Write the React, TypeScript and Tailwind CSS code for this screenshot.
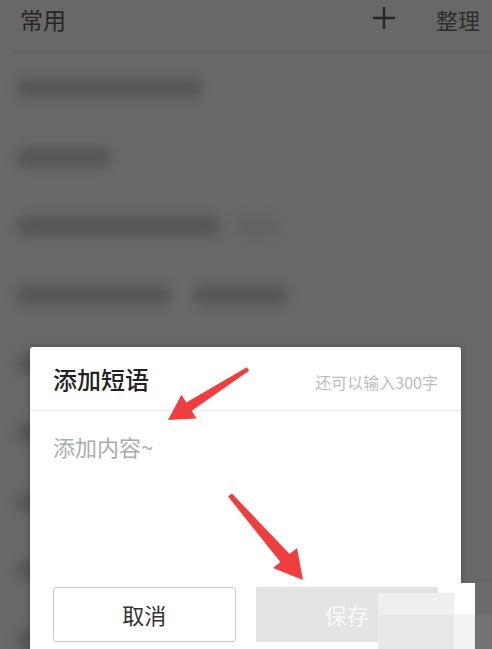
import React from "react";

const rows: { w: number; extra?: { gap: number; w: number; faint?: boolean } }[] = [
  { w: 186 },
  { w: 95 },
  { w: 205, extra: { gap: 15, w: 42, faint: true } },
  { w: 155, extra: { gap: 22, w: 95 } },
  { w: 170 },
  { w: 140 },
  { w: 190 },
  { w: 120 },
  { w: 160 },
];

export default function App() {
  return (
    <div
      className="relative w-[492px] h-[649px] overflow-hidden bg-[#686868]"
      style={{ fontFamily: '"Noto Sans CJK SC", "Noto Sans", sans-serif' }}
    >
      {/* Page header */}
      <div className="flex items-start h-[52px] pt-[6px] pl-[20px] pr-[12px]">
        <span className="text-[23px] leading-[26px] text-[#262626]">常用</span>
        <div className="flex-1" />
        <svg width="26" height="26" viewBox="0 0 26 26" className="mr-[39px] -mt-[1px]">
          <path d="M13 2 V24 M2 13 H24" stroke="#262626" strokeWidth="2.4" fill="none" />
        </svg>
        <span className="text-[22px] leading-[26px] text-[#2e2e2e]">整理</span>
      </div>
      <div className="ml-[13px] h-px bg-[#5e5e5e]" />

      {/* Blurred list */}
      <div className="flex flex-col">
        {rows.map((r, i) => (
          <div key={i} className="h-[69px] flex items-center pl-[16px]">
            <div className="h-[20px] rounded-full bg-[#575757] blur-[5px]" style={{ width: r.w }} />
            {r.extra && (
              <div
                className={`h-[20px] rounded-full blur-[5px] ${r.extra.faint ? "bg-[#636363]" : "bg-[#575757]"}`}
                style={{ width: r.extra.w, marginLeft: r.extra.gap }}
              />
            )}
          </div>
        ))}
      </div>

      {/* Dialog */}
      <div className="absolute left-[30px] top-[347px] w-[431px] h-[320px] bg-white rounded-[3px] shadow-[0_0_6px_rgba(0,0,0,0.25)]">
        <div className="flex items-center justify-between h-[64px] px-[23px] border-b border-[#ebebeb]">
          <span className="text-[24px] leading-none font-medium text-[#222]">添加短语</span>
          <span className="text-[16px] leading-none text-[#bdbdbd] mt-[6px]">还可以输入300字</span>
        </div>
        <div className="px-[23px] pt-[20px]">
          <div className="h-[156px] text-[22px] leading-[30px] text-[#acacac]">添加内容~</div>
          <div className="flex gap-[20px]">
            <div className="w-[183px] h-[55px] flex items-center justify-center border border-[#c9c9c9] rounded-[3px] text-[22px] text-[#333]">
              取消
            </div>
            <div className="w-[183px] h-[55px] flex items-center justify-center bg-[#e3e3e3] rounded-[2px] text-[22px] text-[#f9f9f9]">
              保存
            </div>
          </div>
        </div>
      </div>

      {/* Edited patches at bottom right */}
      <div className="absolute left-[453px] top-[583px] w-[22px] h-[66px] bg-white" />
      <div className="absolute left-[453px] top-[614px] w-[22px] h-[35px] bg-[#f3f3f3]" />
      <div className="absolute left-[378px] top-[593px] w-[76px] h-[22px] bg-[#efefef]" />
      <div className="absolute left-[378px] top-[615px] w-[76px] h-[34px] bg-[#e8e8e8]" />
      <div className="absolute left-[475px] top-[583px] w-[17px] h-[31px] bg-[#6b6b6b]" />
      <div className="absolute left-[475px] top-[614px] w-[17px] h-[35px] bg-[#737373]" />

      {/* Red arrows */}
      <svg className="absolute left-0 top-0 pointer-events-none" width="492" height="649" viewBox="0 0 492 649">
        <polygon
          points="246.9,367.3 249.1,370.7 191.7,410.8 196.5,418.4 168,420 181.5,394.8 186.3,402.4"
          fill="#f03d3d"
        />
        <polygon
          points="231.9,493.4 289.6,554.1 297,548 303,580 273,568 280.4,561.9 228.1,496.6"
          fill="#f03d3d"
        />
      </svg>
    </div>
  );
}
